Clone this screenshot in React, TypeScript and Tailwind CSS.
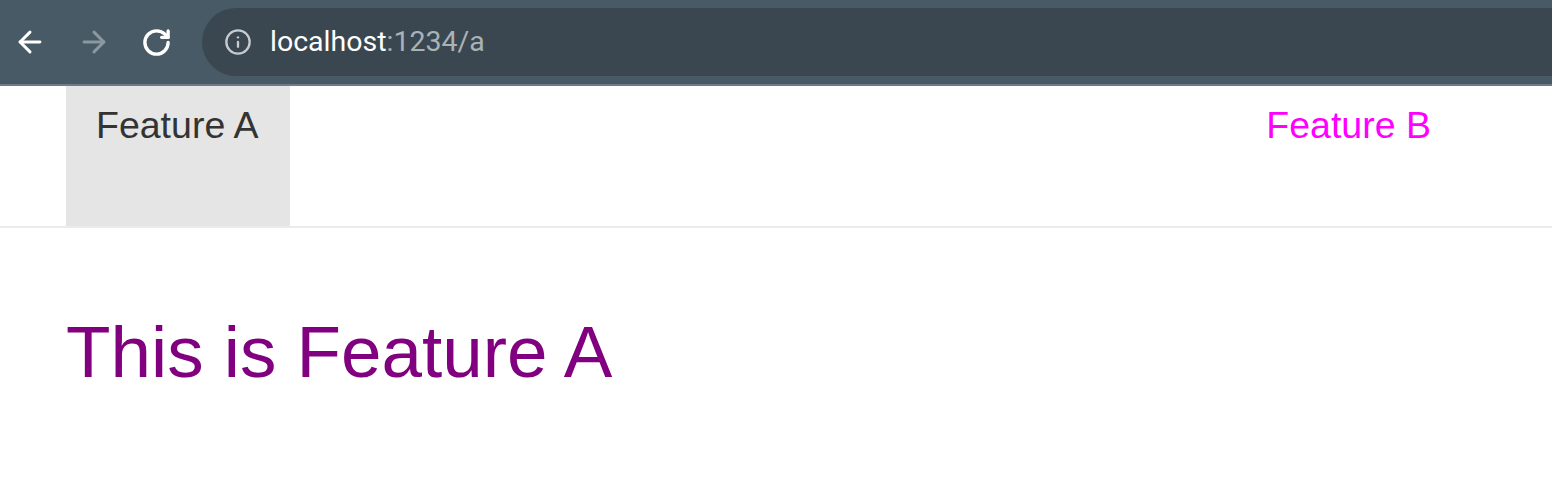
import { ArrowLeft, ArrowRight, RotateCw, Info } from "lucide-react";

export default function App() {
  return (
    <div className="w-[1552px] h-[492px] bg-white overflow-hidden font-['Liberation_Sans',Arial,sans-serif]">
      {/* browser chrome */}
      <div className="h-[84px] bg-[#475a66] flex items-center">
        <div className="flex items-center w-[202px] pl-[13px] gap-[30px]">
          <ArrowLeft size={34} strokeWidth={2.1} className="text-white" />
          <ArrowRight size={34} strokeWidth={2.1} className="text-[#8b989f]" />
          <RotateCw size={31} strokeWidth={2.6} className="text-white" />
        </div>
        <div className="flex-1 h-[68px] bg-[#3a4750] rounded-l-full flex items-center pl-[22px] gap-[18px]">
          <Info size={28} strokeWidth={2} className="text-[#c5cbce]" />
          <span className="text-[28.5px] text-white font-['Roboto',sans-serif]">
            localhost<span className="text-[#a9b2b7]">:1234/a</span>
          </span>
        </div>
      </div>
      <div className="h-[2px] bg-[#6f7c84]" />

      {/* nav */}
      <nav className="h-[142px] border-b-2 border-[#ebebeb] flex justify-between px-[66px] pr-[121px]">
        <a className="bg-[#e5e5e5] h-[140px] px-[30px] pr-[31px] pt-[21px] text-[37.5px] leading-none text-[#333333]">
          Feature A
        </a>
        <a className="pt-[21px] text-[37.5px] leading-none text-[#ff00ff]">Feature B</a>
      </nav>

      <h1 className="mt-[88px] ml-[66px] text-[72.8px] leading-none text-[#800080]">This is Feature A</h1>
    </div>
  );
}
